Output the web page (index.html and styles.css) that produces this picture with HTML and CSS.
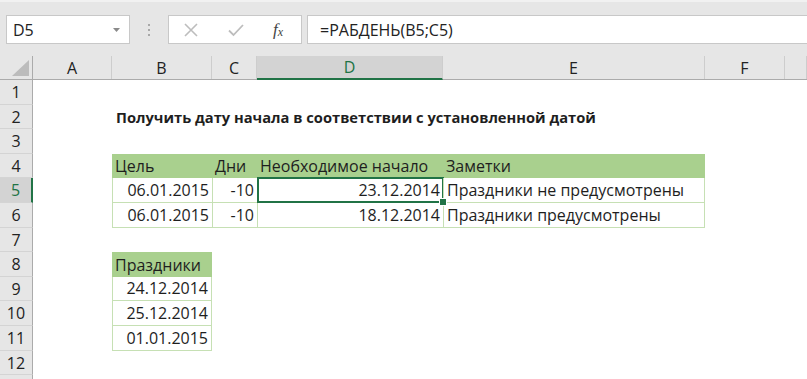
FILE: index.html
```html
<!DOCTYPE html>
<html lang="ru">
<head>
<meta charset="utf-8">
<title>РАБДЕНЬ</title>
<link rel="stylesheet" href="styles.css">
</head>
<body>
<div class="app">
  <div class="toolbar">
    <div class="namebox">
      <span class="nb-text">D5</span>
      <svg class="nb-caret" width="7" height="4" viewBox="0 0 7 4"><path d="M0 0H7L3.5 4Z" fill="#8a8a8a"/></svg>
    </div>
    <div class="grip"><i></i><i></i><i></i></div>
    <div class="fxbox">
      <svg class="ic" width="16" height="16" viewBox="0 0 16 16"><path d="M2 2L14 14M14 2L2 14" stroke="#bdbdbd" stroke-width="1.6" fill="none"/></svg>
      <svg class="ic" width="18" height="16" viewBox="0 0 18 16"><path d="M2 8.5L6.5 13L16 3" stroke="#bdbdbd" stroke-width="1.8" fill="none"/></svg>
      <span class="fx">f<sub>x</sub></span>
    </div>
    <div class="formula">=РАБДЕНЬ(B5;C5)</div>
  </div>

  <div class="sheet">
    <div class="row hdr">
      <div class="corner"><span class="tri"></span></div>
      <div class="ch">A</div>
      <div class="ch">B</div>
      <div class="ch">C</div>
      <div class="ch sel">D</div>
      <div class="ch">E</div>
      <div class="ch">F</div>
      <div class="ch"></div>
    </div>

    <div class="row h25"><div class="rh">1</div><div></div><div></div><div></div><div></div><div></div><div></div><div></div></div>

    <div class="row h24"><div class="rh">2</div><div></div>
      <div class="c title">Получить дату начала в соответствии с установленной датой</div>
      <div></div><div></div><div></div><div></div><div></div></div>

    <div class="row h25"><div class="rh">3</div><div></div><div></div><div></div><div></div><div></div><div></div><div></div></div>

    <div class="row h24"><div class="rh">4</div><div></div>
      <div class="c th">Цель</div>
      <div class="c th">Дни</div>
      <div class="c th">Необходимое начало</div>
      <div class="c th">Заметки</div>
      <div></div><div></div></div>

    <div class="row h25"><div class="rh rsel">5</div><div></div>
      <div class="c t num">06.01.2015</div>
      <div class="c t num">-10</div>
      <div class="c t num active">23.12.2014</div>
      <div class="c t tr">Праздники не предусмотрены</div>
      <div></div><div></div></div>

    <div class="row h25"><div class="rh">6</div><div></div>
      <div class="c t num">06.01.2015</div>
      <div class="c t num">-10</div>
      <div class="c t num">18.12.2014</div>
      <div class="c t tr">Праздники предусмотрены</div>
      <div></div><div></div></div>

    <div class="row h24"><div class="rh">7</div><div></div><div></div><div></div><div></div><div></div><div></div><div></div></div>

    <div class="row h25"><div class="rh">8</div><div></div>
      <div class="c th">Праздники</div>
      <div></div><div></div><div></div><div></div><div></div></div>

    <div class="row h24"><div class="rh">9</div><div></div>
      <div class="c t num tr">24.12.2014</div>
      <div></div><div></div><div></div><div></div><div></div></div>

    <div class="row h25"><div class="rh">10</div><div></div>
      <div class="c t num tr">25.12.2014</div>
      <div></div><div></div><div></div><div></div><div></div></div>

    <div class="row h25"><div class="rh">11</div><div></div>
      <div class="c t num tr">01.01.2015</div>
      <div></div><div></div><div></div><div></div><div></div></div>

    <div class="row h24"><div class="rh">12</div><div></div><div></div><div></div><div></div><div></div><div></div><div></div></div>

    <div class="row h25"><div class="rh"></div><div></div><div></div><div></div><div></div><div></div><div></div><div></div></div>
  </div>
</div>
</body>
</html>
```

FILE: styles.css
```css
* { box-sizing: border-box; }
html, body { margin: 0; padding: 0; }
body {
  width: 807px;
  height: 379px;
  overflow: hidden;
  background: #fff;
  font-family: "Open Sans", "Noto Sans", sans-serif;
  font-size: 16px;
  color: #1e1e1e;
}
.app { width: 807px; height: 379px; overflow: hidden; }

/* toolbar */
.toolbar {
  height: 56px;
  background: #e6e6e6;
  border-top: 2px solid #f1f1f1;
  display: flex;
  align-items: flex-start;
  padding: 13px 0 0 6px;
}
.namebox {
  width: 124px;
  height: 29px;
  background: #fff;
  border: 1px solid #c8c8c8;
  display: flex;
  align-items: center;
  justify-content: space-between;
  padding: 0 9px 0 6px;
}
.nb-text { font-size: 16px; color: #222; }
.grip {
  width: 38px;
  height: 29px;
  display: flex;
  flex-direction: column;
  align-items: center;
  justify-content: center;
  gap: 3px;
}
.grip i { width: 2px; height: 2px; background: #a8a8a8; display: block; }
.fxbox {
  width: 134px;
  height: 29px;
  background: #fff;
  border: 1px solid #c8c8c8;
  display: flex;
  align-items: center;
  padding: 0 0 0 14px;
}
.fxbox .ic:first-child { margin-right: 28px; }
.fxbox .ic:nth-child(2) { margin-right: 28px; }
.fx {
  font-family: "Liberation Serif", "DejaVu Serif", serif;
  font-style: italic;
  font-size: 17px;
  color: #444;
  line-height: 1;
}
.fx sub { font-size: 12px; vertical-align: -1px; }
.formula {
  margin-left: 5px;
  flex: 1;
  height: 29px;
  background: #fff;
  border: 1px solid #c8c8c8;
  border-right: none;
  padding: 0 0 0 12px;
  display: flex;
  align-items: center;
  font-size: 16px;
  color: #222;
}

/* sheet */
.sheet { display: flex; flex-direction: column; }
.row {
  display: grid;
  grid-template-columns: 33px 79px 100px 45px 186px 262px 80px 22px;
}
.h24 { height: 24px; }
.h25 { height: 25px; }
.hdr { height: 24px; background: #e6e6e6; border-bottom: 1px solid #ababab; }
.corner { position: relative; border-right: 1px solid #ababab; }
.tri {
  position: absolute;
  right: 3px;
  bottom: 3px;
  width: 0;
  height: 0;
  border-left: 17px solid transparent;
  border-bottom: 16px solid #bcbcbc;
}
.ch {
  border-right: 1px solid #cdcdcd;
  display: flex;
  align-items: center;
  justify-content: center;
  font-size: 16px;
  color: #222;
  background: #e6e6e6;
}
.ch.sel {
  background: #d3d3d3;
  color: #217346;
  border-bottom: 2px solid #217346;
  margin-bottom: -1px;
}
.rh {
  background: #e6e6e6;
  border-right: 1px solid #ababab;
  border-bottom: 1px solid #d4d4d4;
  display: flex;
  align-items: center;
  justify-content: center;
  font-size: 16px;
  color: #222;
}
.rh.rsel {
  background: #d3d3d3;
  color: #217346;
  border-right: 2px solid #217346;
}

/* cells */
.c {
  display: flex;
  align-items: flex-end;
  padding: 0 3px 1px 3px;
  white-space: nowrap;
  font-size: 16px;
  line-height: 21px;
  position: relative;
}
.title { font-weight: bold; font-size: 14.7px; overflow: visible; padding-left: 4px; }
.th { background: #a9d08e; }
.t {
  border-left: 1px solid #c6e0b4;
  border-bottom: 1px solid #c6e0b4;
}
.tr { border-right: 1px solid #c6e0b4; }
.num { justify-content: flex-end; }
.active::after {
  content: "";
  position: absolute;
  left: -1px;
  top: -1px;
  right: -1px;
  bottom: -1px;
  border: 2px solid #217346;
}
.active::before {
  content: "";
  position: absolute;
  right: -4px;
  bottom: -4px;
  width: 6px;
  height: 6px;
  background: #217346;
  border: 1px solid #fff;
  z-index: 2;
}
```
